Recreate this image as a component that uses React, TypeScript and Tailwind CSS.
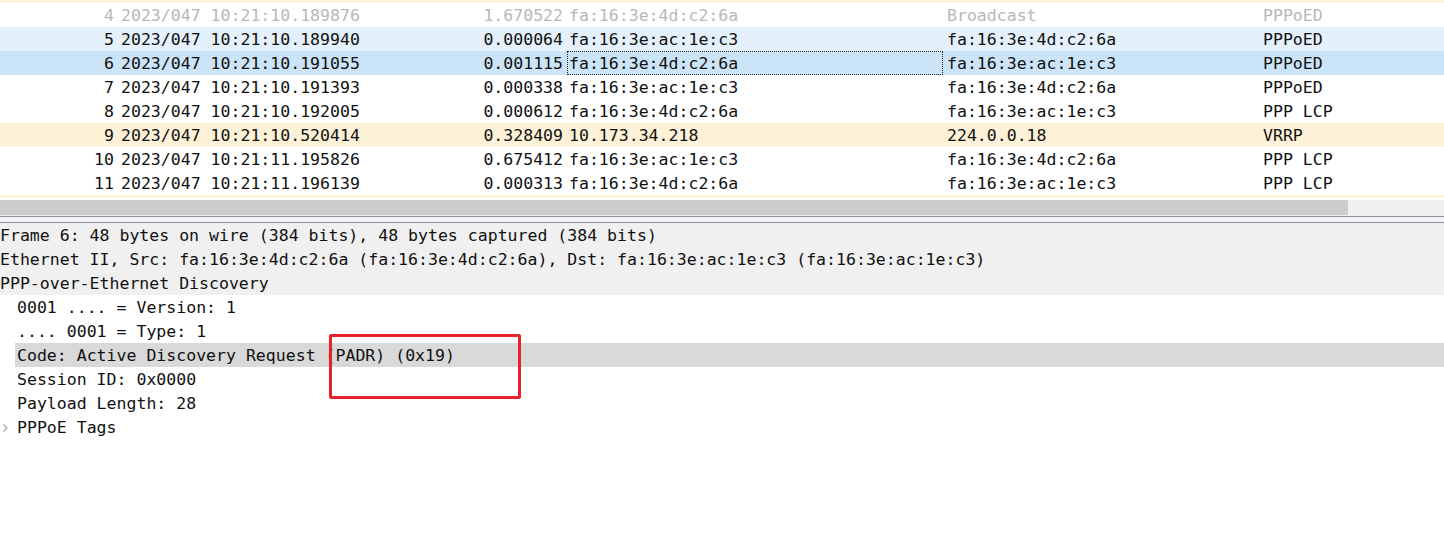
import React from "react";

interface Packet {
  no: number;
  time: string;
  delta: string;
  src: string;
  dst: string;
  proto: string;
  bg: string;
  dim?: boolean;
  focus?: boolean;
}

const packets: Packet[] = [
  { no: 4, time: "2023/047 10:21:10.189876", delta: "1.670522", src: "fa:16:3e:4d:c2:6a", dst: "Broadcast", proto: "PPPoED", bg: "bg-white", dim: true },
  { no: 5, time: "2023/047 10:21:10.189940", delta: "0.000064", src: "fa:16:3e:ac:1e:c3", dst: "fa:16:3e:4d:c2:6a", proto: "PPPoED", bg: "bg-[#e4f0fb]" },
  { no: 6, time: "2023/047 10:21:10.191055", delta: "0.001115", src: "fa:16:3e:4d:c2:6a", dst: "fa:16:3e:ac:1e:c3", proto: "PPPoED", bg: "bg-[#cce4f7]", focus: true },
  { no: 7, time: "2023/047 10:21:10.191393", delta: "0.000338", src: "fa:16:3e:ac:1e:c3", dst: "fa:16:3e:4d:c2:6a", proto: "PPPoED", bg: "bg-white" },
  { no: 8, time: "2023/047 10:21:10.192005", delta: "0.000612", src: "fa:16:3e:4d:c2:6a", dst: "fa:16:3e:ac:1e:c3", proto: "PPP LCP", bg: "bg-white" },
  { no: 9, time: "2023/047 10:21:10.520414", delta: "0.328409", src: "10.173.34.218", dst: "224.0.0.18", proto: "VRRP", bg: "bg-[#fdf1d7]" },
  { no: 10, time: "2023/047 10:21:11.195826", delta: "0.675412", src: "fa:16:3e:ac:1e:c3", dst: "fa:16:3e:4d:c2:6a", proto: "PPP LCP", bg: "bg-white" },
  { no: 11, time: "2023/047 10:21:11.196139", delta: "0.000313", src: "fa:16:3e:4d:c2:6a", dst: "fa:16:3e:ac:1e:c3", proto: "PPP LCP", bg: "bg-white" },
];

const details = [
  { text: "Frame 6: 48 bytes on wire (384 bits), 48 bytes captured (384 bits)", depth: 0, bg: "bg-[#f0f0f0]" },
  { text: "Ethernet II, Src: fa:16:3e:4d:c2:6a (fa:16:3e:4d:c2:6a), Dst: fa:16:3e:ac:1e:c3 (fa:16:3e:ac:1e:c3)", depth: 0, bg: "bg-[#f0f0f0]" },
  { text: "PPP-over-Ethernet Discovery", depth: 0, bg: "bg-[#f0f0f0]" },
  { text: "0001 .... = Version: 1", depth: 1, bg: "bg-white" },
  { text: ".... 0001 = Type: 1", depth: 1, bg: "bg-white" },
  { text: "Code: Active Discovery Request (PADR) (0x19)", depth: 1, bg: "bg-white", selected: true },
  { text: "Session ID: 0x0000", depth: 1, bg: "bg-white" },
  { text: "Payload Length: 28", depth: 1, bg: "bg-white" },
  { text: "PPPoE Tags", depth: 1, bg: "bg-white", expander: true },
];

export default function App() {
  return (
    <div
      className="relative w-[1444px] h-[535px] overflow-hidden bg-white text-[16.55px] leading-[24px] text-[#111] whitespace-pre"
      style={{ fontFamily: '"DejaVu Sans Mono", "Liberation Mono", monospace' }}
    >
      {/* Packet list */}
      <div className="h-[3px] bg-[#fdf1d7]" />
      {packets.map((p) => (
        <div key={p.no} className={`flex h-[24px] leading-[26px] ${p.bg} ${p.dim ? "text-[#b8b8b8]" : ""}`}>
          <div className="w-[114px] text-right">{p.no}</div>
          <div className="w-[347px] pl-[7px]">{p.time}</div>
          <div className="w-[102px] text-right">{p.delta}</div>
          <div className="w-[384px] pl-[4px] pr-[4px]">
            <div
              className={`h-[24px] pl-[1px] border border-dotted leading-[24px] ${p.focus ? "border-[#222]" : "border-transparent"}`}
            >
              {p.src}
            </div>
          </div>
          <div className="w-[316px]">{p.dst}</div>
          <div className="flex-1">{p.proto}</div>
        </div>
      ))}
      <div className="h-[3px] bg-[#fdf1d7]" />
      <div className="h-[2px] bg-white" />

      {/* Horizontal scrollbar */}
      <div className="flex h-[15px] bg-[#f0f0f0]">
        <div className="w-[1348px] bg-[#cdcdcd]" />
      </div>
      <div className="h-[1px] bg-[#f0f0f0]" />
      <div className="h-[1px] bg-[#8e8e9c]" />
      <div className="h-[5px] bg-[#f3f3f3]" />
      <div className="h-[1px] bg-[#8e8e9c]" />

      {/* Packet details */}
      {details.map((d, i) => (
        <div key={i} className={`relative h-[24px] leading-[26px] ${d.bg}`}>
          {d.expander && (
            <svg className="absolute left-[1px] top-[8px]" width="8" height="10" viewBox="0 0 8 10">
              <path d="M2.5 1.5 L6 5 L2.5 8.5" fill="none" stroke="#a6a6a6" strokeWidth="1.2" />
            </svg>
          )}
          <div className={`h-[24px] ${d.depth ? "ml-[15px] pl-[2px]" : ""} ${d.selected ? "bg-[#d9d9d9]" : ""}`}>{d.text}</div>
        </div>
      ))}

      {/* Annotation box */}
      <div className="absolute left-[329px] top-[334px] w-[192px] h-[65px] border-[3px] border-[#e8212b] rounded-[2px]" />
    </div>
  );
}
